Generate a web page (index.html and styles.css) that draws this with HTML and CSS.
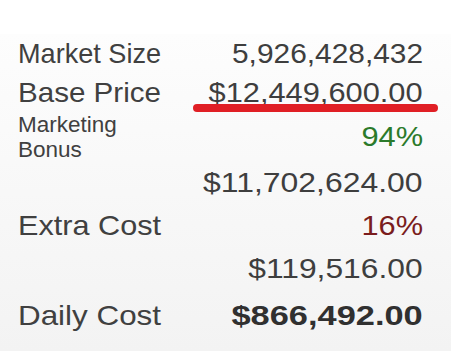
FILE: index.html
```html
<!DOCTYPE html>
<html>
<head>
<meta charset="utf-8">
<link rel="stylesheet" href="styles.css">
</head>
<body>
<div class="page">
  <div class="panel">
    <div class="row r-tight"><span class="label fit-market">Market Size</span><span class="value fit-size">5,926,428,432</span></div>
    <div class="row r-tight"><span class="label fit-base">Base Price</span><span class="value fit-base-v">$12,449,600.00</span></div>
    <div class="row r-bonus"><span class="label small">Marketing<br>Bonus</span><span class="value good fit-pct">94%</span></div>
    <div class="row"><span class="label"></span><span class="value fit-after">$11,702,624.00</span></div>
    <div class="row"><span class="label fit-extra">Extra Cost</span><span class="value bad fit-pct">16%</span></div>
    <div class="row"><span class="label"></span><span class="value fit-extra-v">$119,516.00</span></div>
    <div class="row r-total"><span class="label fit-daily">Daily Cost</span><span class="value strong fit-total">$866,492.00</span></div>
  </div>
  <div class="mark"></div>
</div>
</body>
</html>
```

FILE: styles.css
```css
html, body {
  margin: 0;
  padding: 0;
  background: #ffffff;
}
.page {
  position: relative;
  width: 451px;
  height: 351px;
  padding-top: 34px;
  box-sizing: border-box;
  font-family: "Liberation Sans", Arial, sans-serif;
  color: #3a3a3a;
}
.panel {
  height: 317px;
  box-sizing: border-box;
  padding: 0 28px 0 18px;
  background: linear-gradient(#fdfdfd, #f3f3f3);
}
.row {
  display: flex;
  justify-content: space-between;
  align-items: center;
  height: 43px;
  line-height: 43px;
}
.r-tight {
  height: 39px;
  line-height: 39px;
}
.r-bonus {
  height: 49px;
  line-height: 49px;
}
.r-total {
  margin-top: 4px;
}
.label {
  font-size: 28px;
  color: #404040;
  transform-origin: left center;
}
.label.small {
  font-size: 22.5px;
  line-height: 25px;
  align-self: flex-start;
}
.value {
  font-size: 28px;
  color: #3e3e3e;
  transform-origin: right center;
}
.good {
  color: #2b7a2b;
}
.bad {
  color: #7a1d1d;
}
.strong {
  font-weight: bold;
  color: #303030;
}

/* best-fit horizontal stretch of each text box */
.fit-market { transform: scaleX(0.968); }
.fit-base { transform: scaleX(1.056); }
.fit-extra { transform: scaleX(1.094); }
.fit-daily { transform: scaleX(1.121); }
.fit-size { transform: scaleX(1.067); }
.fit-base-v { transform: scaleX(1.10); }
.fit-pct { transform: scaleX(1.10); }
.fit-after { transform: scaleX(1.14); }
.fit-extra-v { transform: scaleX(1.135); }
.fit-total { transform: scaleX(1.228); }

.mark {
  position: absolute;
  left: 193px;
  top: 104px;
  width: 245px;
  height: 8px;
  border-radius: 4px;
  background: #e01f25;
}
```
